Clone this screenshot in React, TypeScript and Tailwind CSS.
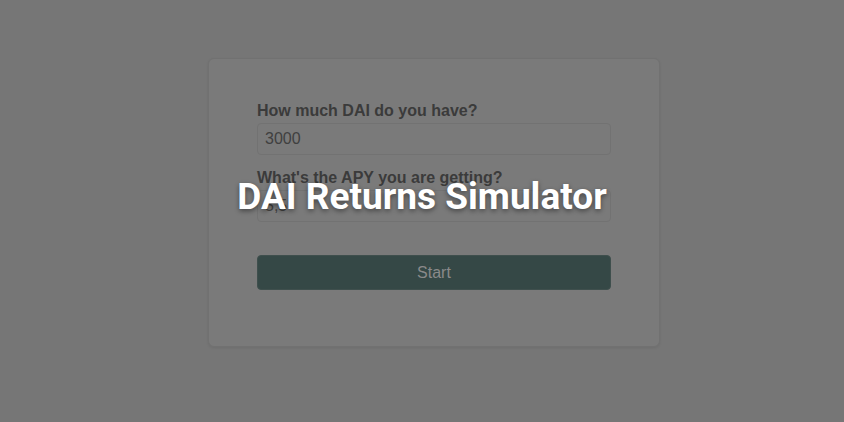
import React from 'react';

export default function App() {
  return (
    <div className="relative h-[422px] w-full overflow-hidden bg-[#767676] font-['Liberation_Sans',Arial,sans-serif]">
      <div className="flex justify-center pl-[24px] pt-[58px]">
        <div className="h-[289px] w-[452px] rounded-md border border-[#717171] bg-[#7a7a7a] px-[48px] pt-[43px] shadow-[0_1px_3px_rgba(0,0,0,0.08)]">
          <label className="block text-[16px] font-bold leading-[18px] text-[#3b3b3b]">How much DAI do you have?</label>
          <div className="mt-[3px] flex h-[32px] items-center rounded-[4px] border border-[#727272] bg-[#7a7a7a] px-[7px] text-[16px] text-[#404040]">
            3000
          </div>
          <label className="mt-[14px] block text-[16px] font-bold leading-[18px] text-[#3b3b3b]">What's the APY you are getting?</label>
          <div className="mt-[3px] flex h-[32px] items-center rounded-[4px] border border-[#727272] bg-[#7a7a7a] px-[7px] text-[16px] text-[#404040]">
            5,5
          </div>
          <div className="mt-[33px] flex h-[35px] items-center justify-center rounded-[4px] border border-[#3f4f4d] bg-[#354846] text-[16px] text-[#8a8a8a]">
            Start
          </div>
        </div>
      </div>
      <div className="absolute inset-x-0 top-[174px] flex justify-center">
        <h1 className="font-['Roboto',sans-serif] text-[37px] font-bold leading-[46px] text-white [text-shadow:0_2px_5px_rgba(0,0,0,0.45)]">
          DAI Returns Simulator
        </h1>
      </div>
    </div>
  );
}
